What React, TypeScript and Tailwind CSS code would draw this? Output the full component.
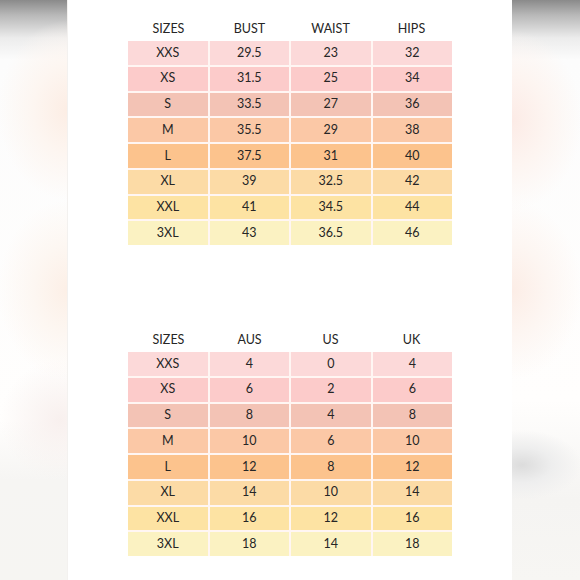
const ROW_COLORS = [
  'bg-[#fcd9d9]',
  'bg-[#fccbca]',
  'bg-[#f3c3b5]',
  'bg-[#fbc8a6]',
  'bg-[#fcc38d]',
  'bg-[#fcdba6]',
  'bg-[#fde3a3]',
  'bg-[#fbf2c2]',
]

const SIZES = ['XXS', 'XS', 'S', 'M', 'L', 'XL', 'XXL', '3XL']

const MEASURES = {
  header: ['SIZES', 'BUST', 'WAIST', 'HIPS'],
  rows: [
    ['29.5', '23', '32'],
    ['31.5', '25', '34'],
    ['33.5', '27', '36'],
    ['35.5', '29', '38'],
    ['37.5', '31', '40'],
    ['39', '32.5', '42'],
    ['41', '34.5', '44'],
    ['43', '36.5', '46'],
  ],
}

const CONVERSIONS = {
  header: ['SIZES', 'AUS', 'US', 'UK'],
  rows: [
    ['4', '0', '4'],
    ['6', '2', '6'],
    ['8', '4', '8'],
    ['10', '6', '10'],
    ['12', '8', '12'],
    ['14', '10', '14'],
    ['16', '12', '16'],
    ['18', '14', '18'],
  ],
}

type ChartProps = {
  header: string[]
  rows: string[][]
}

function SizeChart({ header, rows }: ChartProps) {
  return (
    <div className="w-[324px]">
      {/* column labels */}
      <div className="grid grid-cols-4 h-[24px] items-center text-center">
        {header.map((h) => (
          <span key={h}>{h}</span>
        ))}
      </div>
      {/* colour bands */}
      <div className="flex flex-col gap-[2px] bg-[#fff6f3]">
        {SIZES.map((size, i) => (
          <div key={size} className="grid grid-cols-4 gap-[2px] h-[23.75px]">
            {[size, ...rows[i]].map((v, j) => (
              <div key={j} className={`${ROW_COLORS[i]} flex items-center justify-center`}>
                {v}
              </div>
            ))}
          </div>
        ))}
      </div>
    </div>
  )
}

export default function App() {
  return (
    <div className="flex w-[580px] h-[580px] overflow-hidden font-['Lato','Liberation_Sans',sans-serif] text-[12.5px] text-[#262626]">
      {/* blurred left edge */}
      <div className="w-[68px] h-full border-r border-[#f3f1ef] bg-[radial-gradient(ellipse_70px_90px_at_68px_110px,#fcede4,#fdf6f1_50%,transparent),radial-gradient(ellipse_70px_90px_at_68px_290px,#fcefe6,#fdf7f2_50%,transparent),radial-gradient(ellipse_60px_60px_at_60px_420px,#f8f0ee,transparent),linear-gradient(to_bottom,#8a8a8a_0px,#b8b8b8_15px,#ececec_38px,#fcfcfc_60px,#fffefd_420px,#f6f5f3_480px,#f6f5f2_580px)]" />

      {/* white page */}
      <div className="w-[444px] h-full bg-white flex flex-col pl-[60px] pt-[17px]">
        <SizeChart {...MEASURES} />
        <div className="h-[83px]" />
        <SizeChart {...CONVERSIONS} />
      </div>

      {/* blurred right edge */}
      <div className="w-[68px] h-full bg-[radial-gradient(ellipse_70px_90px_at_0px_120px,#fcebe6,#fdf5f1_50%,transparent),radial-gradient(ellipse_70px_90px_at_0px_290px,#fcede6,#fdf6f2_50%,transparent),radial-gradient(ellipse_60px_35px_at_10px_465px,#dcdcdc,#eeeeee_50%,transparent),linear-gradient(to_bottom,#8a8a8a_0px,#b8b8b8_15px,#ececec_38px,#fcfcfc_60px,#fffefd_400px,#f5f4f2_500px,#f7f6f3_580px)]" />
    </div>
  )
}
